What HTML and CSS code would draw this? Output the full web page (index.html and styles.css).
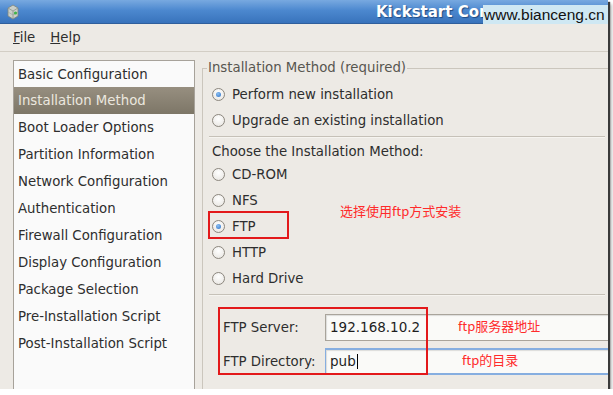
FILE: index.html
```html
<!DOCTYPE html>
<html lang="en">
<head>
  <meta charset="UTF-8" />
  <title>Kickstart Configurator</title>
  <link rel="stylesheet" href="styles.css">
</head>
<body>
  <div class="window">
    <div class="titlebar">
      <svg class="app-icon" width="12" height="16" viewBox="0 0 12 16">
        <path d="M1 4 L6 1 L11 4 L11 12 L6 15 L1 12 Z" fill="#c9cfc9" stroke="#7d857e" stroke-width="0.8"/>
        <path d="M1 4 L6 7 L11 4 M6 7 L6 15" fill="none" stroke="#8c948d" stroke-width="0.8"/>
        <path d="M1 8 L6 11 L11 8" fill="none" stroke="#9aa29b" stroke-width="0.6"/>
        <circle cx="8.5" cy="9" r="1.6" fill="#3fb34a"/>
      </svg>
      <span class="title">Kickstart Configurator</span>
    </div>

    <div class="menubar">
      <span><u>F</u>ile</span>
      <span><u>H</u>elp</span>
    </div>

    <div class="main">
      <ul class="sections">
        <li>Basic Configuration</li>
        <li class="selected">Installation Method</li>
        <li>Boot Loader Options</li>
        <li>Partition Information</li>
        <li>Network Configuration</li>
        <li>Authentication</li>
        <li>Firewall Configuration</li>
        <li>Display Configuration</li>
        <li>Package Selection</li>
        <li>Pre-Installation Script</li>
        <li>Post-Installation Script</li>
      </ul>

      <fieldset class="method">
        <legend>Installation Method (required)</legend>
        <div class="radio checked"><span class="dot"></span>Perform new installation</div>
        <div class="radio"><span class="dot"></span>Upgrade an existing installation</div>
        <div class="sep"></div>
        <div class="caption">Choose the Installation Method:</div>
        <div class="radio"><span class="dot"></span>CD-ROM</div>
        <div class="radio"><span class="dot"></span>NFS</div>
        <div class="radio checked"><span class="dot"></span>FTP</div>
        <div class="radio"><span class="dot"></span>HTTP</div>
        <div class="radio"><span class="dot"></span>Hard Drive</div>
        <div class="sep"></div>
        <div class="ftp-fields">
          <label>FTP Server:</label>
          <div class="entry">192.168.10.2</div>
          <label>FTP Directory:</label>
          <div class="entry focused">pub<span class="caret"></span></div>
        </div>
      </fieldset>
    </div>

    <div class="watermark">www.bianceng.cn</div>

    <!-- red annotations drawn on top of the screenshot -->
    <div class="mark mark-ftp"></div>
    <div class="mark mark-fields"></div>
    <div class="note note-ftp">选择使用ftp方式安装</div>
    <div class="note note-server">ftp服务器地址</div>
    <div class="note note-dir">ftp的目录</div>
  </div>
</body>
</html>
```

FILE: styles.css
```css
body {
  margin: 0;
  background: #fff;
  font-family: "DejaVu Sans", sans-serif;
  font-size: 13.3px;
  color: #2e2e2e;
}
.window {
  position: relative;
  width: 608px;
  height: 389px;
  background: #edeae5;
  overflow: hidden;
  box-shadow: 2px 2px 1px #3a3a3a, 4px 4px 3px rgba(0, 0, 0, 0.25);
}

/* title bar */
.titlebar {
  height: 24px;
  display: flex;
  align-items: center;
  padding-left: 7px;
  background: linear-gradient(#78a9e0, #4c88cf 45%, #3873bc);
  border-bottom: 1px solid #2f5f9c;
  box-sizing: border-box;
}
.app-icon {
  display: block;
}
.title {
  margin-left: 357px;
  width: 107px;
  overflow: hidden;
  color: #fff;
  font-weight: bold;
  font-size: 15px;
  white-space: nowrap;
  text-shadow: 1px 1px 1px #1f4a82;
}
.watermark {
  position: absolute;
  left: 483px;
  top: 5px;
  width: 125px;
  height: 19px;
  background: #cfe8f3;
  font-family: "Liberation Sans", Arial, sans-serif;
  font-size: 15.5px;
  line-height: 19px;
  color: #111;
  text-indent: 1px;
}

/* menu */
.menubar {
  height: 27px;
  display: flex;
  align-items: center;
  gap: 15px;
  padding-left: 13px;
  border-bottom: 1px solid #d3cec5;
}

/* main area */
.main {
  display: flex;
  gap: 7px;
  padding: 8px 0 0 13px;
}
.sections {
  list-style: none;
  margin: 0;
  padding: 0;
  width: 180px;
  height: 340px;
  flex: none;
  background: #fafafa;
  border: 1px solid #a7a29a;
}
.sections li {
  height: 27px;
  line-height: 28px;
  padding-left: 4px;
  white-space: nowrap;
}
.sections li:first-child {
  height: 26px;
  line-height: 28px;
}
.sections li.selected {
  background: linear-gradient(#978f80, #7d7667);
  color: #ebe7df;
}

.method {
  flex: 1;
  margin: 0 -6px 0 0;
  padding: 5px 8px 0 9px;
  height: 360px;
  border: 1px solid #cbc6bd;
  min-width: 0;
}
.method legend {
  padding: 0 1px;
  margin-left: -5px;
  line-height: 16px;
  color: #585650;
}
.radio {
  height: 26px;
  display: flex;
  align-items: center;
  gap: 7px;
}
.dot {
  width: 11px;
  height: 11px;
  border: 1px solid #8c877e;
  border-radius: 50%;
  background: radial-gradient(circle at 50% 35%, #fff, #e6e3de);
  position: relative;
}
.radio.checked .dot::after {
  content: "";
  position: absolute;
  left: 3px;
  top: 3px;
  width: 5px;
  height: 5px;
  border-radius: 50%;
  background: radial-gradient(circle at 40% 35%, #8cc0f2, #2c6fc6);
}
.sep {
  height: 1px;
  margin: 3px 0 0 -3px;
  background: #c6c1b8;
  border-bottom: 1px solid #f6f4f0;
}
.caption {
  height: 23px;
  line-height: 27px;
}
.ftp-fields {
  display: grid;
  grid-template-columns: 102px 300px;
  row-gap: 7px;
  align-items: center;
  margin: 18px 0 0 11px;
}
.entry {
  height: 25px;
  line-height: 25px;
  padding-left: 4px;
  background: #fafaf8;
  border: 1px solid #a9a49b;
  box-shadow: inset 1px 1px 1px rgba(0, 0, 0, 0.12);
  font-size: 13.5px;
  color: #1e1e1e;
}
.entry.focused {
  height: 23px;
  line-height: 23px;
  border: 2px solid #86aee0;
  border-left-width: 1px;
  padding-left: 4px;
}
.caret {
  display: inline-block;
  width: 1px;
  height: 15px;
  margin-left: 1px;
  background: #000;
  vertical-align: -3px;
}

/* annotations */
.mark {
  position: absolute;
  border: 2px solid #e3191b;
}
.mark-ftp {
  left: 208px;
  top: 211px;
  width: 77px;
  height: 24px;
}
.mark-fields {
  left: 218px;
  top: 307px;
  width: 206px;
  height: 64px;
}
.note {
  position: absolute;
  font-family: "Noto Sans CJK SC", sans-serif;
  font-size: 13px;
  line-height: 16px;
  color: #ff2b2b;
  white-space: nowrap;
}
.note-ftp {
  left: 340px;
  top: 203px;
}
.note-server {
  left: 458px;
  top: 318px;
}
.note-dir {
  left: 462px;
  top: 352px;
}
```
